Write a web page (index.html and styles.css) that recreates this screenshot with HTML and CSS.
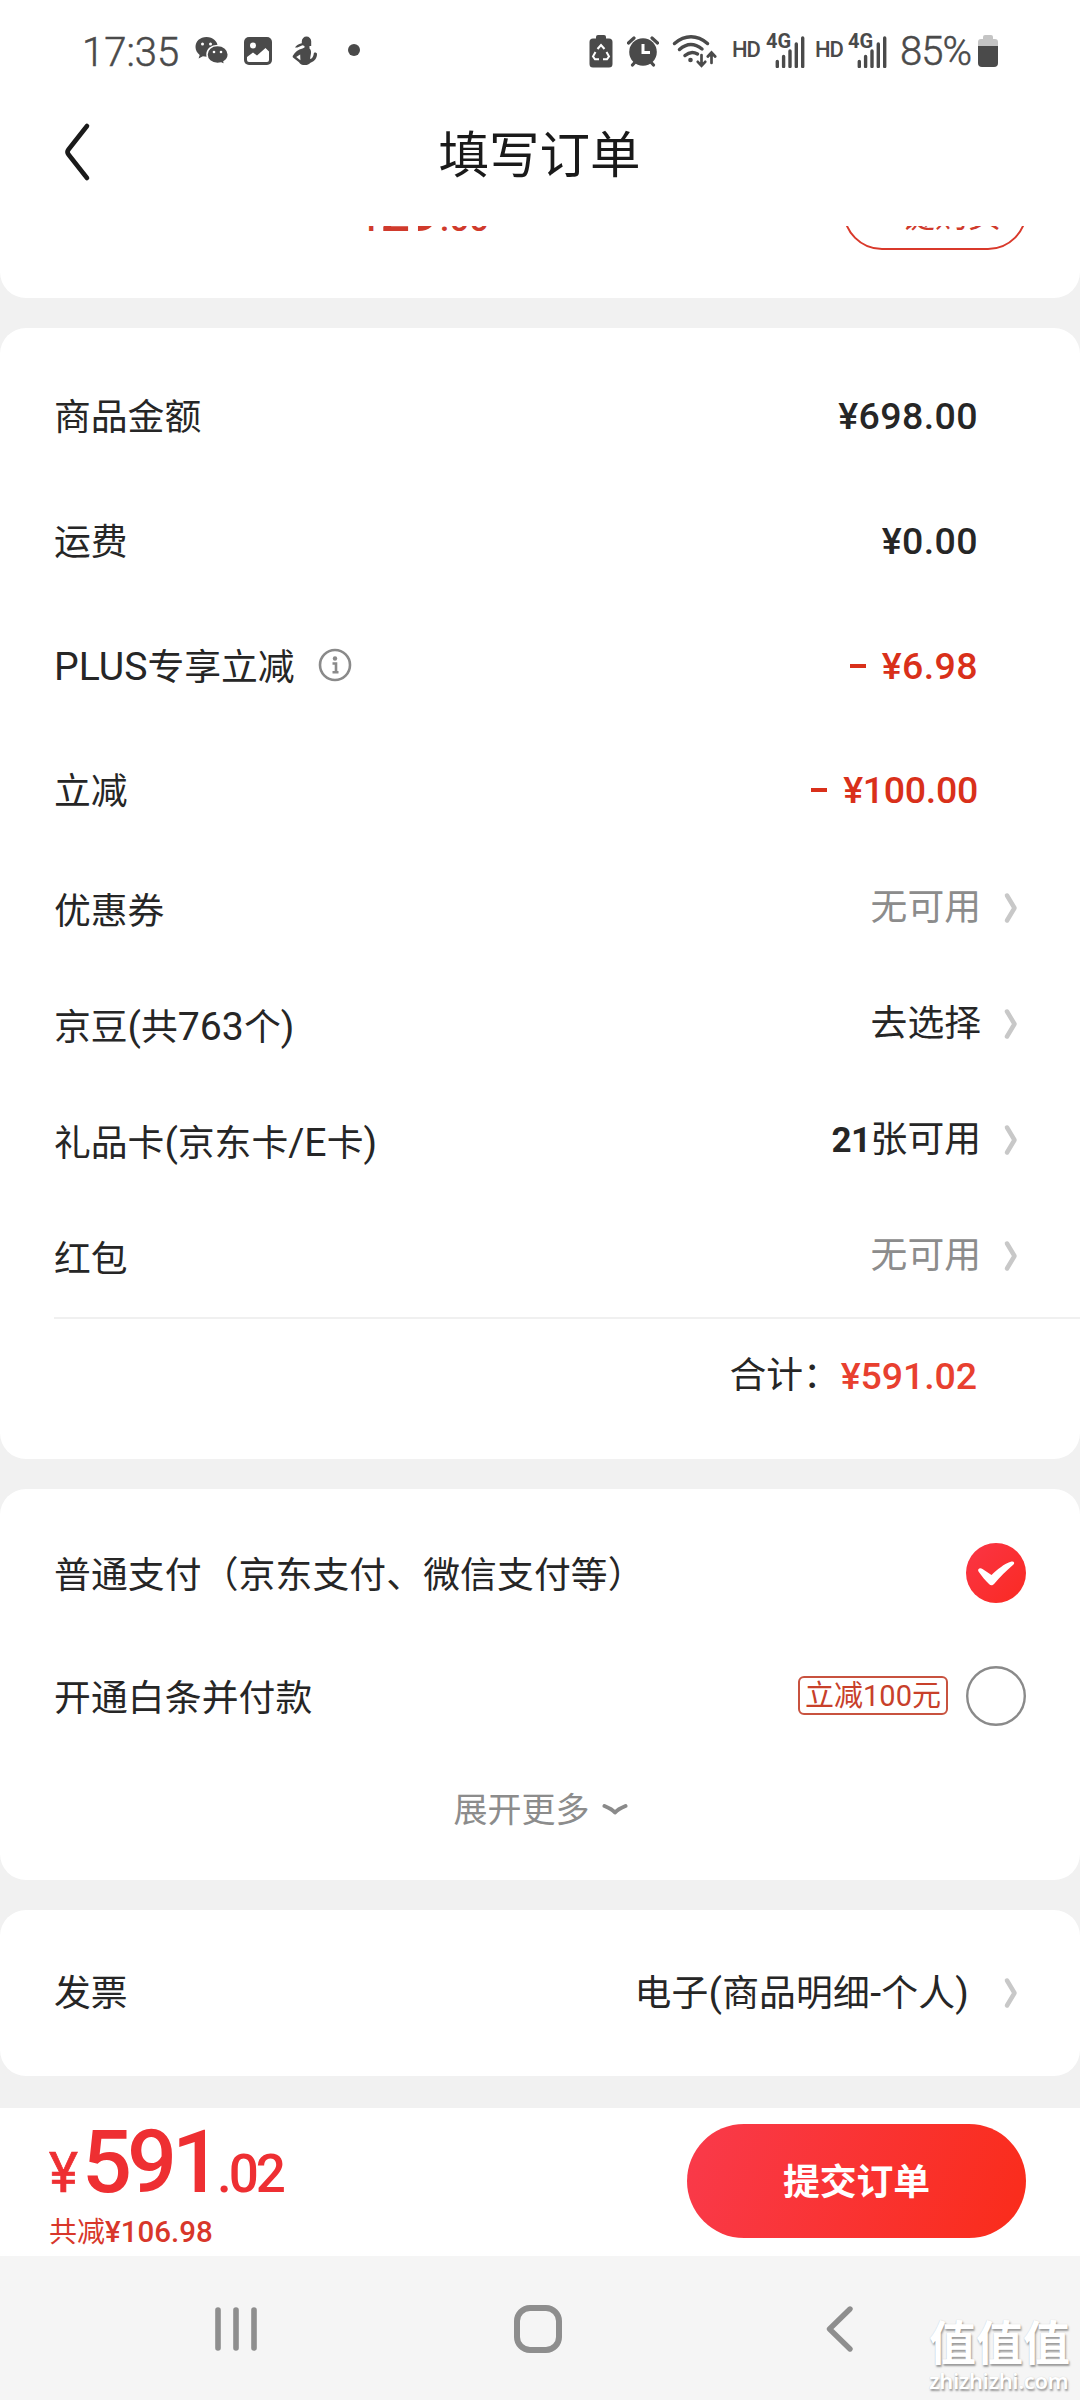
FILE: index.html
```html
<!DOCTYPE html>
<html lang="zh-CN">
<head>
<meta charset="utf-8">
<title>填写订单</title>
<link rel="stylesheet" href="styles.css">
</head>
<body>
<svg class="defs" width="0" height="0" aria-hidden="true">
  <symbol id="signal" viewBox="0 0 40 34">
    <path d="M10.3 27.5v5M16.6 22.5v10M23 17v15.500M29.300 10v22.500M35.700 4v28.500" stroke="#4a4a4a" stroke-width="3.400" stroke-linecap="round"/>
  </symbol>
  <symbol id="arrow" viewBox="0 0 16 34">
    <path d="M4 4.500L11.500 17L4 29.500" fill="none" stroke="#c8c8c8" stroke-width="4.500" stroke-linecap="round" stroke-linejoin="round"/>
  </symbol>
</svg>
<div class="screen">
  <header class="status">
    <div class="status-left">
      <span class="clock">17:35</span>
      <svg class="wechat" width="34" height="30" viewBox="0 0 34 30">
        <path d="M11.500 1C5 1 .5 5.200 .5 11c0 3.300 1.700 6 4.200 7.900L3.600 22.500l4.300-2.200c1.300.3 2.400.5 3.800.5C18 20.800 22.800 16.500 22.800 11S18 1 11.500 1z" fill="#4a4a4a"/>
        <path d="M22.500 9.500c-6.200 0-10.500 4-10.500 9s4.300 9 10.500 9c1.300 0 2.500-.2 3.700-.5l3.800 2-1-3.300c2.600-1.700 4.300-4.200 4.300-7.200 0-5-4.600-9-10.800-9z" fill="#4a4a4a" stroke="#fff" stroke-width="1.500"/>
        <g fill="#fff"><circle cx="7.500" cy="8" r="1.500"/><circle cx="15.500" cy="8" r="1.500"/><circle cx="19" cy="16" r="1.300"/><circle cx="26" cy="16" r="1.300"/></g>
      </svg>
      <svg class="gallery" width="28" height="28" viewBox="0 0 28 28">
        <rect width="28" height="28" rx="5" fill="#4a4a4a"/>
        <circle cx="9" cy="8.500" r="3" fill="#fff"/>
        <path d="M3 20L9 15.500L13 18.500L21.500 11L25 14.500V23a2 2 0 0 1-2 2H5a2 2 0 0 1-2-2z" fill="#fff"/>
      </svg>
      <svg class="figure" width="26" height="30" viewBox="0 0 26 30">
        <path d="M14.500 .5a4.700 4.700 0 0 1 4.700 4.700v4.800h-1.700v2.500c1.500 1.200 2 3.500 1.200 6.500l-.7 4 1.500-.5c1.500-1.300 2-3 2.300-5 .2-1.500 3.200-1 3.200.5 0 4-2 7-6.500 8.700-1.500 1.800-3.200 2.300-5.500 2.300-2.800 0-5-.8-6-2.800L1 21.500c-.5-.7-.4-1.500 0-2 2.300-3.500 5-6.200 9.500-7l2-1V10l-2-.8C8 10.500 5.500 11.800 3 11.500 4 9.500 6.200 8.200 9.800 7.200V5.200A4.700 4.700 0 0 1 14.500 .5z" fill="#4a4a4a"/>
        <path d="M8.200 18.500l-4 2.500 4.200 3.200z" fill="#fff"/>
      </svg>
      <span class="dot"></span>
    </div>
    <div class="status-right">
      <svg class="saver" width="24" height="34" viewBox="0 0 24 34">
        <path d="M7 3a2 2 0 0 1 2-2h6a2 2 0 0 1 2 2v1.500h3a3.500 3.500 0 0 1 3.500 3.500v22a3.500 3.500 0 0 1-3.500 3.500H4A3.500 3.500 0 0 1 .5 30V8A3.500 3.500 0 0 1 4 4.500h3z" fill="#4a4a4a"/>
        <path d="M8.500 15l3.500-4 3.500 4M17.500 18l2.500 4.500-2 2.800h-4M10 25.300H6L4 22.500 6.500 18" fill="none" stroke="#fff" stroke-width="2"/>
      </svg>
      <svg class="alarm" width="32" height="32" viewBox="0 0 32 32">
        <circle cx="16" cy="17" r="13.800" fill="#4a4a4a"/>
        <path d="M1.500 8L7 3M30.500 8L25 3M5.500 30l4-4.500M26.500 30l-4-4.500" stroke="#4a4a4a" stroke-width="3.200" stroke-linecap="round"/>
        <path d="M16 9v8.500h7" fill="none" stroke="#fff" stroke-width="3"/>
      </svg>
      <svg class="wifi" width="45" height="34" viewBox="0 0 45 34">
        <g fill="none" stroke="#4a4a4a" stroke-width="3.500" stroke-linecap="round">
          <path d="M2.500 9.500C13 .5 25 .5 35.500 9.500M7.500 15.500c7.200-6.500 15-6.500 22.500-.5M13 21.500c4-3.500 8.500-3.800 12.500-1.500"/>
          <path d="M29.500 21v10M25.800 27.800l3.700 4 3.700-4M39.500 29V19M35.800 22.500l3.700-4 3.700 4" stroke-width="2.700"/>
        </g>
        <circle cx="18.500" cy="26" r="2.300" fill="#4a4a4a"/>
      </svg>
      <span class="hd">HD</span>
      <span class="net"><span class="gen">4G</span><svg width="40" height="34"><use href="#signal"/></svg></span>
      <span class="hd hd-two">HD</span>
      <span class="net"><span class="gen">4G</span><svg width="40" height="34"><use href="#signal"/></svg></span>
      <span class="percent">85%</span>
      <svg class="battery" width="20" height="32" viewBox="0 0 20 32">
        <path d="M5 4V2a2 2 0 0 1 2-2h6a2 2 0 0 1 2 2v2h2a3 3 0 0 1 3 3v5H0V7a3 3 0 0 1 3-3z" fill="#c4c4c4"/>
        <path d="M0 11h20v17a4 4 0 0 1-4 4H4a4 4 0 0 1-4-4z" fill="#4a4a4a"/>
      </svg>
    </div>
  </header>

  <div class="topbar">
    <svg class="back" width="30" height="62" viewBox="0 0 30 62">
      <path d="M24 5L5.500 28.500a4 4 0 0 0 0 5L24 57" fill="none" stroke="#1a1a1a" stroke-width="4.600" stroke-linecap="round"/>
    </svg>
    <h1 class="title">填写订单</h1>
  </div>

  <section class="card peek">
    <div class="peek-row">
      <span class="peek-price"><small>¥</small>29<small>.00</small></span>
      <span class="peek-button">一键购买</span>
    </div>
  </section>

  <section class="card summary">
    <div class="row"><span class="label">商品金额</span><span class="amount">¥698.00</span></div>
    <div class="row"><span class="label">运费</span><span class="amount">¥0.00</span></div>
    <div class="row">
      <span class="label with-info"><span><span class="latin">PLUS</span>专享立减</span>
        <svg width="34" height="34" viewBox="0 0 34 34"><circle cx="17" cy="17" r="15" fill="none" stroke="#8a8a8a" stroke-width="2.600"/><circle cx="17" cy="10.500" r="2.200" fill="#8a8a8a"/><path d="M14.500 15.500H18V24M14.500 24.300h6" fill="none" stroke="#8a8a8a" stroke-width="2.600"/></svg>
      </span>
      <span class="amount red"><i class="minus"></i>¥6.98</span>
    </div>
    <div class="row"><span class="label">立减</span><span class="amount red tight"><i class="minus"></i>¥100.00</span></div>
    <div class="row link"><span class="label">优惠券</span><span class="value muted">无可用</span><svg width="16" height="34"><use href="#arrow"/></svg></div>
    <div class="row link"><span class="label">京豆<span class="latin">(</span>共<span class="latin">763</span>个<span class="latin">)</span></span><span class="value">去选择</span><svg width="16" height="34"><use href="#arrow"/></svg></div>
    <div class="row link"><span class="label">礼品卡<span class="latin">(</span>京东卡<span class="latin">/E</span>卡<span class="latin">)</span></span><span class="value"><b>21</b>张可用</span><svg width="16" height="34"><use href="#arrow"/></svg></div>
    <div class="row link"><span class="label">红包</span><span class="value muted">无可用</span><svg width="16" height="34"><use href="#arrow"/></svg></div>
    <div class="total"><span class="total-label">合计：</span><span class="total-price">¥591.02</span></div>
  </section>

  <section class="card payment">
    <div class="pay-row">
      <span class="pay-name">普通支付（京东支付、微信支付等）</span>
      <svg class="radio" width="60" height="60" viewBox="0 0 60 60">
        <defs><linearGradient id="check" x1="0" x2="1" y1="0" y2="1"><stop offset="0" stop-color="#fa3545"/><stop offset="1" stop-color="#fa2a22"/></linearGradient></defs>
        <circle cx="30" cy="30" r="30" fill="url(#check)"/>
        <path d="M12.500 28.500C11 26 14 24 16.500 26L25.500 32C31 27 38 20.500 45.500 18.500C48 18 49 20 47.500 21.500C41 27.500 33.500 34 28.500 40.500C26.500 43 24.500 42.500 23 41C19.500 37.500 15.500 33 12.500 28.500Z" fill="#fff"/>
      </svg>
    </div>
    <div class="pay-row">
      <span class="pay-name">开通白条并付款</span>
      <span class="tag">立减100元</span>
      <svg class="radio" width="60" height="60" viewBox="0 0 60 60"><circle cx="30" cy="30" r="28.800" fill="#fff" stroke="#8a8a8a" stroke-width="2.400"/></svg>
    </div>
    <div class="expand">
      <span>展开更多</span>
      <svg width="26" height="14" viewBox="0 0 26 14"><path d="M2.500 3Q10 6 13 9.500Q16 6 23.500 3" fill="none" stroke="#8a8a8a" stroke-width="4" stroke-linecap="round" stroke-linejoin="round"/></svg>
    </div>
  </section>

  <section class="card invoice">
    <span>发票</span>
    <span class="invoice-value">电子<span class="latin">(</span>商品明细<span class="latin">-</span>个人<span class="latin">)</span></span>
    <svg width="16" height="34"><use href="#arrow"/></svg>
  </section>

  <footer class="checkout">
    <div class="sum">
      <div class="sum-price"><span class="unit">¥</span><span class="int">591</span><span class="dec">.02</span></div>
      <div class="saved">共减<b>¥106.98</b></div>
    </div>
    <button class="submit">提交订单</button>
  </footer>

  <nav class="system-nav">
    <svg width="44" height="46" viewBox="0 0 44 46"><path d="M4 4v38M22 4v38M40 4v38" stroke="#8e8e8e" stroke-width="5.600" stroke-linecap="round"/></svg>
    <svg class="home" width="48" height="48" viewBox="0 0 48 48"><rect x="3" y="3" width="42" height="42" rx="13" fill="none" stroke="#8e8e8e" stroke-width="6"/></svg>
    <svg width="30" height="48" viewBox="0 0 30 48"><path d="M26 4L5.500 24L26 44" fill="none" stroke="#8e8e8e" stroke-width="5.400" stroke-linecap="round" stroke-linejoin="round"/></svg>
  </nav>
  <div class="watermark"><div class="mark">值值值</div><div class="site">zhizhizhi.com</div></div>
</div>
</body>
</html>
```
FILE: styles.css
```css
* { box-sizing: border-box; }
body {
  margin: 0;
  background: #f1f1f1;
  color: #262626;
  font-family: Roboto, "Noto Sans CJK SC", sans-serif;
  font-size: 36.8px;
  line-height: 48px;
}
svg { display: block; flex: none; }
.defs { position: absolute; }
.screen {
  position: relative;
  width: 1080px;
  height: 2400px;
  overflow: hidden;
  display: flex;
  flex-direction: column;
}

/* Status bar */
.status {
  height: 84px;
  padding: 18px 82px 0 82px;
  background: #fff;
  color: #4a4a4a;
  display: flex;
  justify-content: space-between;
  flex: none;
}
.status-left, .status-right { display: flex; align-items: center; height: 66px; white-space: nowrap; }
.clock { font-size: 40px; font-weight: 300; width: 113px; padding-top: 3px; -webkit-text-stroke: .5px #4a4a4a; }
.gallery { margin-left: 15px; }
.figure { margin-left: 20px; }
.dot { width: 12px; height: 12px; border-radius: 50%; background: #4a4a4a; margin: -2px 0 0 30px; }
.alarm { margin-left: 14px; }
.wifi { margin-left: 13px; }
.hd { font-size: 22px; font-weight: 500; letter-spacing: -1px; width: 34px; margin: -3px 0 0 15px; }
.hd-two { margin-left: 8px; }
.hd + .net { margin-left: 1px; }
.hd-two + .net { margin-left: 0; }
.net { position: relative; }
.gen {
  position: absolute;
  left: -1px;
  top: -3px;
  font-size: 20px;
  line-height: 20px;
  font-weight: 700;
  text-shadow: 1px 1px 0 #fff;
}
.percent { font-size: 40px; font-weight: 300; margin-left: 11px; letter-spacing: -1px; width: 75px; padding-top: 1px; -webkit-text-stroke: .5px #4a4a4a; }
.battery { margin-left: 3px; }

/* Title bar */
.topbar {
  height: 142px;
  background: #fff;
  display: grid;
  grid-template-columns: 120px 1fr 121px;
  align-items: center;
  flex: none;
}
.back { margin-left: 63px; margin-top: -6px; }
.title { margin: 2px 0 0; font-size: 50.5px; font-weight: 400; line-height: 60px; text-align: center; color: #1a1a1a; }

/* Cards */
.card { background: #fff; border-radius: 26px; margin-bottom: 30px; flex: none; }
.peek {
  height: 72px;
  border-radius: 0 0 26px 26px;
  overflow: hidden;
  display: flex;
  align-items: flex-start;
}
.peek-row {
  flex: 1;
  margin-top: -54px;
  padding: 0 53px 0 362px;
  display: flex;
  justify-content: space-between;
  align-items: center;
  color: #d03a2c;
}
.peek-price { font-size: 52px; font-weight: 500; padding-top: 12px; }
.peek-price small { font-size: 35px; }
.peek-button {
  width: 184px;
  height: 78px;
  border: 2px solid #d9392b;
  border-radius: 39px;
  font-size: 33px;
  line-height: 84px;
  text-align: center;
}

.summary { height: 1131px; padding: 27px 0 0 54px; }
.row { height: 124.700px; padding-right: 102px; display: flex; align-items: center; justify-content: space-between; }
.row.link { height: 116px; padding-right: 61px; }
.row.link:nth-of-type(5) { margin-top: -1px; }
.label { padding-top: 2px; }
.latin { font-size: 39.2px; }
.amount { font-weight: 500; font-size: 37.5px; letter-spacing: .4px; margin-top: -2px; display: flex; align-items: center; }
.tight { letter-spacing: -.3px; }
.red { color: #d9301a; }
.minus { width: 16px; height: 4px; background: currentColor; margin-right: 16px; }
.with-info { display: flex; align-items: center; gap: 23px; }
.with-info svg { margin-top: -5px; }
.value { margin: -5px 22px 0 auto; }
.link svg { margin-top: -5px; }
.value b { font-weight: 700; font-size: 35px; letter-spacing: -.5px; }
.muted { color: #8c8c8c; }
.total {
  border-top: 2px solid #f0f0f0;
  height: 116px;
  padding-right: 103px;
  display: flex;
  align-items: center;
  justify-content: flex-end;
}
.total-label { margin-right: 1px; }
.total-price { color: #e8402f; font-weight: 500; font-size: 37.5px; letter-spacing: -.1px; }

.payment { height: 391px; padding: 22px 54px 0 54px; }
.pay-row { height: 123px; display: flex; align-items: center; }
.pay-row .radio { margin-left: auto; }
.pay-name { padding-top: 7px; letter-spacing: .12px; }
.tag {
  margin-left: auto;
  width: 150px;
  height: 39px;
  border: 2px solid #c8523f;
  border-radius: 6px;
  color: #c8402a;
  font-size: 29px;
  line-height: 36px;
  text-align: center;
  white-space: nowrap;
}
.pay-row .tag + .radio { margin-left: 18px; }
.expand { height: 104px; padding: 1px 0 0 1px; display: flex; align-items: center; justify-content: center; gap: 12px; color: #8c8c8c; font-size: 34px; }

.invoice { height: 166px; padding: 1px 61px 0 54px; display: flex; align-items: center; }
.invoice-value { margin: 0 34px 0 auto; letter-spacing: .2px; }
.invoice svg { margin-top: -2px; }

/* Checkout bar */
.checkout {
  height: 148px;
  margin-top: 2px;
  padding: 16px 54px 0 49px;
  background: #fff;
  display: flex;
  justify-content: space-between;
  flex: none;
}
.sum { color: #ee2f32; white-space: nowrap; }
.sum-price { height: 82px; line-height: 82px; font-weight: 500; margin-top: -3px; }
.unit { font-size: 55px; font-weight: 400; -webkit-text-stroke: .7px #ee2f32; }
.dec { font-size: 53px; letter-spacing: -3px; }
.int { font-size: 88px; letter-spacing: -5px; margin-left: 4px; }
.saved { font-size: 28px; line-height: 36px; margin-top: 11px; color: #d8372a; }
.saved b { font-weight: 500; font-size: 29.5px; }
.submit {
  width: 339px;
  height: 114px;
  padding: 3px 0 0;
  border: 0;
  border-radius: 57px;
  background: linear-gradient(110deg, #f93a4b, #fa2c1a);
  color: #fff;
  font: 700 36.8px/48px Roboto, "Noto Sans CJK SC", sans-serif;
}

/* Android navigation */
.system-nav {
  height: 144px;
  background: #f5f5f5;
  padding: 2px 226px 0 214px;
  display: flex;
  align-items: center;
  justify-content: space-between;
  flex: none;
}
.home { margin-right: 6px; }
.watermark {
  position: absolute;
  left: 929px;
  top: 2317px;
  color: #fff;
  text-shadow: 1px 2px 2px #9a9a9a, 0 0 1px #c8c8c8;
  white-space: nowrap;
}
.mark { font-size: 47px; line-height: 54px; font-weight: 700; }
.site { font: 600 22px/24px "Noto Sans", sans-serif; margin-top: -3px; letter-spacing: -.4px; }
```
